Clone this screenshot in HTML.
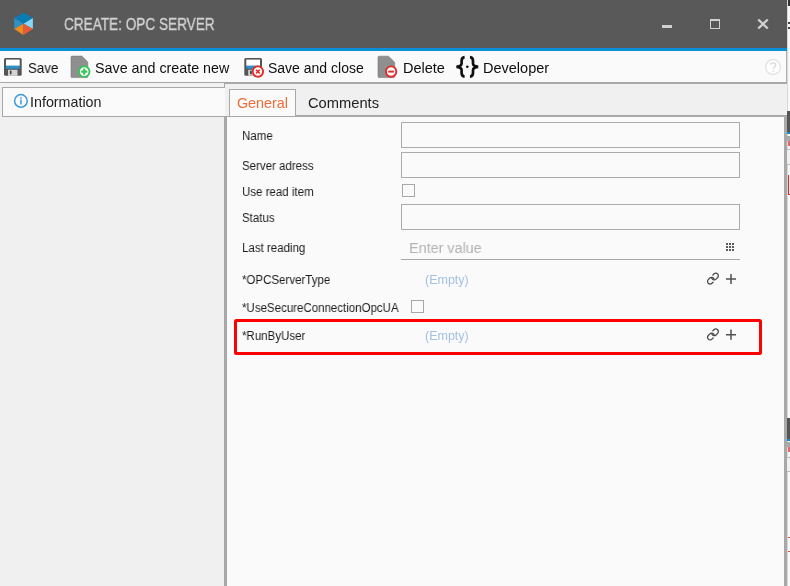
<!DOCTYPE html>
<html><head><meta charset="utf-8">
<style>
*{margin:0;padding:0;box-sizing:border-box}
html,body{width:790px;height:586px;overflow:hidden;background:#fff;font-family:"Liberation Sans",sans-serif;-webkit-font-smoothing:antialiased}
.t{will-change:transform}
.a{position:absolute}
.t{position:absolute;white-space:nowrap;line-height:1}
.tb{font-size:14.3px;color:#0e0e0e}
.lb{font-size:12.5px;color:#1c1c1c;transform-origin:0 0;transform:scaleX(0.92)}
.inp{position:absolute;left:401px;width:339px;height:26px;border:1px solid #ababab;background:#fafafa}
.cb{position:absolute;width:13px;height:13px;border:1px solid #a8a8a8;background:#fafafa}
.em{font-size:12.5px;color:#a3c1e3}
</style></head><body>
<!-- background window strip on right -->
<div class="a" style="left:787px;top:0;width:3px;height:586px;background:#f8f8f8"></div>
<div class="a" style="left:787px;top:0;width:1px;height:586px;background:#d8d8d8"></div>
<div class="a" style="left:788px;top:0;width:2px;height:6px;background:#333"></div>
<div class="a" style="left:788px;top:22px;width:2px;height:2px;background:#444"></div>
<div class="a" style="left:788px;top:27px;width:2px;height:2px;background:#444"></div>
<div class="a" style="left:787px;top:111px;width:3px;height:21px;background:#555"></div>
<div class="a" style="left:787px;top:132px;width:3px;height:2px;background:#0a8fd6"></div>
<div class="a" style="left:787px;top:136px;width:3px;height:5px;background:#aaa"></div>
<div class="a" style="left:788px;top:141px;width:2px;height:5px;background:#e66"></div>
<div class="a" style="left:787px;top:149px;width:3px;height:1px;background:#bbb"></div>
<div class="a" style="left:787px;top:150px;width:3px;height:14px;background:#f0f0f0"></div>
<div class="a" style="left:787px;top:164px;width:3px;height:1px;background:#bbb"></div>
<div class="a" style="left:788px;top:175px;width:1px;height:20px;background:#e22"></div>
<div class="a" style="left:788px;top:194px;width:2px;height:1px;background:#e22"></div>
<div class="a" style="left:787px;top:418px;width:3px;height:21px;background:#555"></div>
<div class="a" style="left:787px;top:439px;width:3px;height:2px;background:#0a8fd6"></div>
<div class="a" style="left:787px;top:442px;width:3px;height:5px;background:#aaa"></div>
<div class="a" style="left:788px;top:447px;width:2px;height:5px;background:#e66"></div>
<div class="a" style="left:787px;top:457px;width:3px;height:1px;background:#bbb"></div>
<div class="a" style="left:787px;top:458px;width:3px;height:13px;background:#f0f0f0"></div>
<div class="a" style="left:787px;top:471px;width:3px;height:1px;background:#bbb"></div>
<div class="a" style="left:788px;top:537px;width:2px;height:1px;background:#e44"></div>
<div class="a" style="left:788px;top:551px;width:2px;height:1px;background:#e44"></div>

<!-- window -->
<div class="a" style="left:0;top:0;width:787px;height:586px;background:#f0f0f0"></div>
<!-- title bar -->
<div class="a" style="left:0;top:0;width:787px;height:48px;background:#595959"></div>
<svg class="a" style="left:13px;top:12px" width="21" height="24" viewBox="13 12 21 24">
 <polygon points="14.2,18 23.5,12.7 32.9,18 23.5,23.8" fill="#0a7bb3"/>
 <polygon points="14.2,18 23.5,23.8 14.2,29" fill="#2d92c6"/>
 <polygon points="32.9,18 32.9,29 23.5,23.8" fill="#86d8f7"/>
 <polygon points="14.2,29 23.5,23.8 23.5,35" fill="#f28c1f"/>
 <polygon points="32.9,29 23.5,35 23.5,23.8" fill="#e95a3a"/>
</svg>
<div class="t" style="left:64px;top:15.8px;font-size:17px;color:#d2d2d2;-webkit-text-stroke:0.35px #d2d2d2;transform-origin:0 0;transform:scaleX(0.80)">CREATE: OPC SERVER</div>
<div class="a" style="left:662px;top:25px;width:10px;height:2.5px;background:#d0d0d0"></div>
<div class="a" style="left:710px;top:19px;width:10px;height:10px;border:1px solid #d0d0d0;border-top-width:2px"></div>
<svg class="a" style="left:757px;top:18px" width="12" height="12" viewBox="0 0 12 12"><path d="M1.2 1.5L10.8 10.5M10.8 1.5L1.2 10.5" stroke="#d0d0d0" stroke-width="2.3"/></svg>
<!-- blue line -->
<div class="a" style="left:0;top:48px;width:787px;height:3px;background:#0a8fd6"></div>
<!-- toolbar -->
<div class="a" style="left:0;top:51px;width:787px;height:31px;background:#fafafa;border-right:1px solid #b0b0b0"></div>
<div class="a" style="left:0;top:82px;width:787px;height:1px;background:#a8a8a8"></div>
<div class="a" style="left:224px;top:83px;width:563px;height:1px;background:#a8a8a8"></div>
<div class="a" style="left:0;top:83px;width:224px;height:4px;background:#f2f2f2"></div>
<div class="a" style="left:224px;top:82px;width:1px;height:6px;background:#a8a8a8"></div>

<!-- toolbar icons -->
<svg class="a" style="left:0;top:52px" width="560" height="30" viewBox="0 52 560 30">
 <!-- save floppy -->
 <rect x="4" y="58" width="17.7" height="17.8" rx="1.5" fill="#555"/>
 <rect x="6" y="59.6" width="13.7" height="6.2" fill="#fff"/>
 <rect x="6" y="65.8" width="13.7" height="3" fill="#2a90c8"/>
 <rect x="8" y="69.8" width="9.5" height="6" fill="#d4d4d4"/>
 <rect x="9.8" y="70.6" width="1.8" height="3.8" rx="0.8" fill="#444"/>
 <!-- doc + green plus -->
 <path d="M72 56.1 H81.8 L87.8 62 V76.6 a1 1 0 0 1 -1 1 H72 a1 1 0 0 1 -1 -1 V57.1 a1 1 0 0 1 1 -1Z" fill="#8f8f8f" stroke="#7a7a7a" stroke-width="0.6"/>
 <circle cx="84.2" cy="71.6" r="5.3" fill="#fff" stroke="#37c45c" stroke-width="1.9"/>
 <path d="M84.2 68.5V74.7M81.1 71.6H87.3" stroke="#37c45c" stroke-width="2.1"/>
 <!-- save & close -->
 <rect x="244.3" y="58" width="17.7" height="17.7" rx="1.5" fill="#555"/>
 <rect x="246.3" y="59.6" width="13.7" height="6.2" fill="#fff"/>
 <rect x="246.3" y="65.8" width="13.7" height="3" fill="#2a90c8"/>
 <rect x="248.2" y="69.8" width="9.5" height="5.9" fill="#d4d4d4"/>
 <rect x="250" y="70.6" width="1.8" height="3.8" rx="0.8" fill="#444"/>
 <circle cx="257.9" cy="71.6" r="5.2" fill="#fff" stroke="#e42a2a" stroke-width="1.9"/>
 <path d="M256 69.7L259.8 73.5M259.8 69.7L256 73.5" stroke="#e42a2a" stroke-width="1.6"/>
 <!-- delete -->
 <path d="M379 56.2 H388.5 L394.7 62.3 V76.6 a1 1 0 0 1 -1 1 H379 a1 1 0 0 1 -1 -1 V57.2 a1 1 0 0 1 1 -1Z" fill="#8f8f8f" stroke="#7a7a7a" stroke-width="0.6"/>
 <circle cx="391.1" cy="71.6" r="5.2" fill="#fff" stroke="#e42a2a" stroke-width="1.9"/>
 <path d="M388.3 71.6H393.9" stroke="#e42a2a" stroke-width="2"/>
 <!-- developer braces -->
 <path d="M464.6 57.2 C462.3 57.4 461.6 58.8 461.6 61 V63.6 C461.6 65.5 460 66.5 456.4 66.8 C460 67.1 461.6 68.1 461.6 70 V72.8 C461.6 75 462.3 76.4 464.6 76.6" fill="none" stroke="#111" stroke-width="2.7"/>
 <path d="M470 57.2 C472.3 57.4 473 58.8 473 61 V63.6 C473 65.5 474.6 66.5 478.2 66.8 C474.6 67.1 473 68.1 473 70 V72.8 C473 75 472.3 76.4 470 76.6" fill="none" stroke="#111" stroke-width="2.7"/>
 <circle cx="467.3" cy="66.8" r="1.3" fill="#111"/>
</svg>
<div class="t tb" style="left:28px;top:60.6px;transform-origin:0 0;transform:scaleX(0.93)">Save</div>
<div class="t tb" style="left:95px;top:60.6px">Save and create new</div>
<div class="t tb" style="left:268px;top:60.8px;font-size:14px">Save and close</div>
<div class="t tb" style="left:402.5px;top:60.5px;font-size:14.5px">Delete</div>
<div class="t tb" style="left:482.5px;top:60.5px;font-size:14.5px">Developer</div>
<!-- help -->
<svg class="a" style="left:764px;top:58px" width="18" height="18" viewBox="764 58 18 18">
 <circle cx="773" cy="67" r="7.4" fill="#fff" stroke="#e0e0e0" stroke-width="1.2"/>
 <path d="M770.6 64.8 C770.6 62.3 775.7 62.3 775.7 64.8 C775.7 66.6 773.4 66.8 773.4 68.9" fill="none" stroke="#dcdcdc" stroke-width="1.6"/>
 <circle cx="773.4" cy="71.1" r="0.95" fill="#dcdcdc"/>
</svg>

<!-- left panel: Information tab -->
<div class="a" style="left:2px;top:87px;width:223px;height:30px;background:#fafafa;border:1px solid #a8a8a8;border-right:none"></div>
<svg class="a" style="left:13px;top:93px" width="16" height="16" viewBox="13 93 16 16">
 <circle cx="20.9" cy="100.9" r="6.3" fill="none" stroke="#3d9bd6" stroke-width="1.5"/>
 <rect x="20.2" y="99.6" width="1.5" height="4.8" fill="#3d9bd6"/>
 <rect x="20.2" y="97.2" width="1.5" height="1.5" fill="#3d9bd6"/>
</svg>
<div class="t tb" style="left:30.2px;top:95.2px;color:#222">Information</div>

<!-- right tabs -->
<div class="a" style="left:229px;top:89px;width:67px;height:27px;background:#fafafa;border:1px solid #a8a8a8;border-bottom:none"></div>
<div class="t tb" style="left:236.8px;top:95.8px;color:#f26a36">General</div>
<div class="t tb" style="left:307.8px;top:95.6px;color:#222;font-size:14.7px">Comments</div>

<!-- content panel -->
<div class="a" style="left:224px;top:116px;width:563px;height:470px;background:#fafafa;border-left:3px solid #a8a8a8;border-top:1px solid #a8a8a8;border-right:3px solid #a8a8a8"></div>
<div class="a" style="left:296px;top:115px;width:491px;height:1px;background:#a8a8a8"></div>

<!-- form -->
<div class="t lb" style="left:241.9px;top:129.8px">Name</div>
<div class="inp" style="top:122px"></div>
<div class="t lb" style="left:241.9px;top:159.7px">Server adress</div>
<div class="inp" style="top:152px"></div>
<div class="t lb" style="left:241.9px;top:186.1px">Use read item</div>
<div class="cb" style="left:402px;top:184px"></div>
<div class="t lb" style="left:241.9px;top:211.7px">Status</div>
<div class="inp" style="top:204px"></div>
<div class="t lb" style="left:241.9px;top:241.9px">Last reading</div>
<div class="t" style="left:409.4px;top:239.7px;font-size:15.3px;color:#b3b3b3;transform-origin:0 0;transform:scaleX(0.94)">Enter value</div>
<div class="a" style="left:401px;top:259px;width:339px;height:1px;background:#a8a8a8"></div>
<svg class="a" style="left:725px;top:242px" width="10" height="10" viewBox="0 0 10 10" fill="#5c5c5c">
 <rect x="1" y="1" width="2" height="2"/><rect x="4" y="1" width="2" height="2"/><rect x="7" y="1" width="2" height="2"/>
 <rect x="1" y="4" width="2" height="2"/><rect x="4" y="4" width="2" height="2"/><rect x="7" y="4" width="2" height="2"/>
 <rect x="1" y="7" width="2" height="2"/><rect x="4" y="7" width="2" height="2"/><rect x="7" y="7" width="2" height="2"/>
</svg>
<div class="t lb" style="left:241.9px;top:273.5px">*OPCServerType</div>
<div class="t em" style="left:425px;top:274.3px">(Empty)</div>
<div class="t lb" style="left:241.9px;top:301.6px">*UseSecureConnectionOpcUA</div>
<div class="cb" style="left:411px;top:300px"></div>
<div class="t lb" style="left:241.9px;top:329.9px">*RunByUser</div>
<div class="t em" style="left:425px;top:330.2px">(Empty)</div>

<!-- link + plus icons -->
<svg class="a" style="left:700px;top:266px" width="45" height="80" viewBox="700 266 45 80">
 <g fill="none" stroke="#4a4a4a" stroke-width="1.3" stroke-linecap="round">
  <path transform="translate(715.0 276.5) rotate(-45)" d="M-0.4 -2.6 H1.1 A2.6 2.6 0 0 1 1.1 2.6 H-1.1 A2.6 2.6 0 0 1 -3.46 -1.10"/>
  <path transform="translate(710.9 280.7) rotate(-45)" d="M0.4 2.6 H-1.1 A2.6 2.6 0 0 1 -1.1 -2.6 H1.1 A2.6 2.6 0 0 1 3.46 1.10"/>
  <path transform="translate(715.0 332.3) rotate(-45)" d="M-0.4 -2.6 H1.1 A2.6 2.6 0 0 1 1.1 2.6 H-1.1 A2.6 2.6 0 0 1 -3.46 -1.10"/>
  <path transform="translate(710.9 336.5) rotate(-45)" d="M0.4 2.6 H-1.1 A2.6 2.6 0 0 1 -1.1 -2.6 H1.1 A2.6 2.6 0 0 1 3.46 1.10"/>
 </g>
 <g stroke="#505050" stroke-width="1.5">
  <path d="M731 274V284M726 278.9H736"/>
  <path d="M731 329.6V339.8M726 334.7H736"/>
 </g>
</svg>

<!-- red highlight box -->
<div class="a" style="left:234px;top:319px;width:528px;height:36px;border:3px solid #ff0000;border-radius:2.5px"></div>
</body></html>
